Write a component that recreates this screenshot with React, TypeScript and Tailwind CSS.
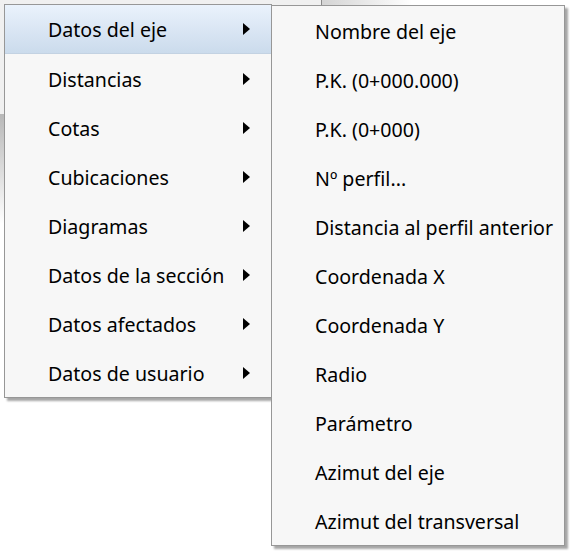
import React from 'react';

const mainItems = [
  'Datos del eje',
  'Distancias',
  'Cotas',
  'Cubicaciones',
  'Diagramas',
  'Datos de la sección',
  'Datos afectados',
  'Datos de usuario',
];

const subItems = [
  'Nombre del eje',
  'P.K. (0+000.000)',
  'P.K. (0+000)',
  'Nº perfil...',
  'Distancia al perfil anterior',
  'Coordenada X',
  'Coordenada Y',
  'Radio',
  'Parámetro',
  'Azimut del eje',
  'Azimut del transversal',
];

function Arrow() {
  return (
    <svg width="8" height="12" viewBox="0 0 8 12" className="shrink-0">
      <path d="M0 0 L7 6 L0 12 Z" fill="#000" />
    </svg>
  );
}

export default function App() {
  return (
    <div
      className="relative w-[575px] h-[553px] bg-white overflow-hidden text-black"
      style={{ fontFamily: '"Noto Sans", "Open Sans", sans-serif' }}
    >
      {/* window edges behind the menus */}
      <div className="absolute inset-x-0 top-0 h-[5px] flex">
        <div className="w-[322px] bg-[#f0f0f0] border-r border-[#8a8a8a]" />
        <div className="w-[90px] bg-gradient-to-r from-[#d4d4d4] to-white" />
      </div>
      <div className="absolute left-0 top-0 w-[4px] h-[224px] flex flex-col">
        <div className="h-[114px] bg-[#f0f0f0]" />
        <div className="flex-1 bg-gradient-to-b from-[#b8b8b8] to-white" />
      </div>

      {/* main menu */}
      <div className="absolute left-[4px] top-[4px] w-[268px] border border-[#979797] bg-[#f7f7f7] shadow-[3px_3px_2px_rgba(0,0,0,0.35)]">
        {mainItems.map((item, i) => (
          <div
            key={item}
            className={`h-[49px] flex items-center justify-between pl-[43px] pr-[20px] text-[19.6px] ${
              i === 0
                ? 'bg-gradient-to-b from-[#eaf2fc] to-[#cbdbec] border-b border-[#c3d2e2]'
                : ''
            }`}
          >
            <span className="pt-[2px]">{item}</span>
            <Arrow />
          </div>
        ))}
      </div>

      {/* submenu */}
      <div className="absolute left-[271px] top-[5px] w-[294px] border border-[#979797] bg-[#f7f7f7] shadow-[3px_3px_2px_rgba(0,0,0,0.35)]">
        {subItems.map((item) => (
          <div key={item} className="h-[49px] flex items-center pl-[43px] text-[19.6px] whitespace-nowrap">
            <span className="pt-[2px]">{item}</span>
          </div>
        ))}
      </div>
    </div>
  );
}
